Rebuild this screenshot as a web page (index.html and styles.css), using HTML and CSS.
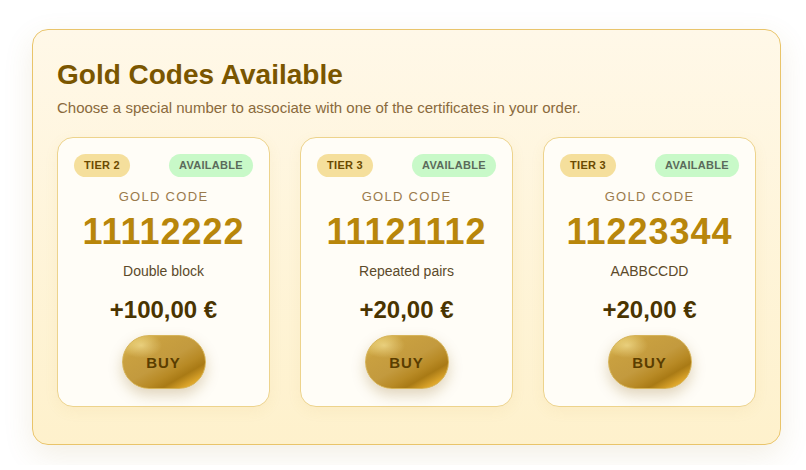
FILE: index.html
```html
<!DOCTYPE html>
<html lang="en">
<head>
<meta charset="utf-8">
<title>Gold Codes</title>
<link rel="stylesheet" href="styles.css">
</head>
<body>
<section class="panel">
  <h1 class="title">Gold Codes Available</h1>
  <p class="subtitle">Choose a special number to associate with one of the certificates in your order.</p>
  <div class="cards">
    <div class="card">
      <div class="badges"><span class="tier">TIER 2</span><span class="avail">AVAILABLE</span></div>
      <div class="label">GOLD CODE</div>
      <div class="code">11112222</div>
      <div class="desc">Double block</div>
      <div class="price">+100,00 €</div>
      <button class="buy">BUY</button>
    </div>
    <div class="card">
      <div class="badges"><span class="tier">TIER 3</span><span class="avail">AVAILABLE</span></div>
      <div class="label">GOLD CODE</div>
      <div class="code">11121112</div>
      <div class="desc">Repeated pairs</div>
      <div class="price">+20,00 €</div>
      <button class="buy">BUY</button>
    </div>
    <div class="card">
      <div class="badges"><span class="tier">TIER 3</span><span class="avail">AVAILABLE</span></div>
      <div class="label">GOLD CODE</div>
      <div class="code">11223344</div>
      <div class="desc">AABBCCDD</div>
      <div class="price">+20,00 €</div>
      <button class="buy">BUY</button>
    </div>
  </div>
</section>
</body>
</html>
```
FILE: styles.css
```css
html, body {
  margin: 0;
  padding: 0;
  background: #ffffff;
  font-family: "Liberation Sans", Arial, sans-serif;
}
body {
  padding: 29px 25px 20px 32px;
}
.panel {
  border: 1px solid #e9c46a;
  border-radius: 16px;
  background: linear-gradient(180deg, #fff8e8 0%, #fef1cc 100%);
  box-shadow: 0 10px 30px rgba(160, 120, 40, 0.12);
  padding: 29px 24px 37px 24px;
}
.title {
  margin: 0;
  font-size: 28px;
  line-height: 32px;
  font-weight: 700;
  color: #7a5600;
}
.subtitle {
  margin: 7px 0 0 0;
  font-size: 15px;
  line-height: 20px;
  color: #8a6a3c;
}
.cards {
  margin-top: 19px;
  display: grid;
  grid-template-columns: repeat(3, 1fr);
  gap: 30px;
}
.card {
  background: #fffdf7;
  border: 1px solid #edd38c;
  border-radius: 16px;
  padding: 16px 16px 17px 16px;
  display: flex;
  flex-direction: column;
  align-items: center;
  box-shadow: 0 4px 14px rgba(200, 160, 60, 0.08);
}
.badges {
  align-self: stretch;
  display: flex;
  justify-content: space-between;
  align-items: center;
}
.tier, .avail {
  font-size: 11px;
  font-weight: 700;
  line-height: 23px;
  height: 23px;
  border-radius: 12px;
  letter-spacing: 0.3px;
}
.tier {
  background: #f5df9c;
  color: #6b4a00;
  padding: 0 10px;
}
.avail {
  background: #c8f9c8;
  color: #5b6b5b;
  padding: 0 10px;
}
.label {
  margin-top: 12px;
  font-size: 13px;
  line-height: 16px;
  letter-spacing: 1.3px;
  color: #9a7a4c;
}
.code {
  margin-top: 7px;
  font-size: 36px;
  line-height: 40px;
  font-weight: 700;
  color: #b8860b;
  letter-spacing: 1px;
}
.desc {
  margin-top: 10px;
  font-size: 14px;
  line-height: 18px;
  color: #5c4a2a;
}
.price {
  margin-top: 16px;
  font-size: 24px;
  line-height: 28px;
  font-weight: 700;
  color: #4a3400;
}
.buy {
  margin-top: 11px;
  width: 84px;
  height: 54px;
  border-radius: 27px;
  border: 1px solid #d6b45a;
  font-family: "Liberation Sans", Arial, sans-serif;
  font-size: 15px;
  font-weight: 700;
  letter-spacing: 1px;
  color: #5a3d00;
  background:
    radial-gradient(ellipse 30px 18px at 22% 18%, rgba(255, 240, 170, 0.55), rgba(255, 240, 170, 0) 70%),
    linear-gradient(150deg, #e2c25a 0%, #c9a040 25%, #c39a3e 50%, #b88a25 65%, #a97a15 75%, #e0a82c 88%, #c08c22 100%);
  box-shadow: 0 6px 14px rgba(130, 90, 10, 0.25);
  cursor: pointer;
}
```
